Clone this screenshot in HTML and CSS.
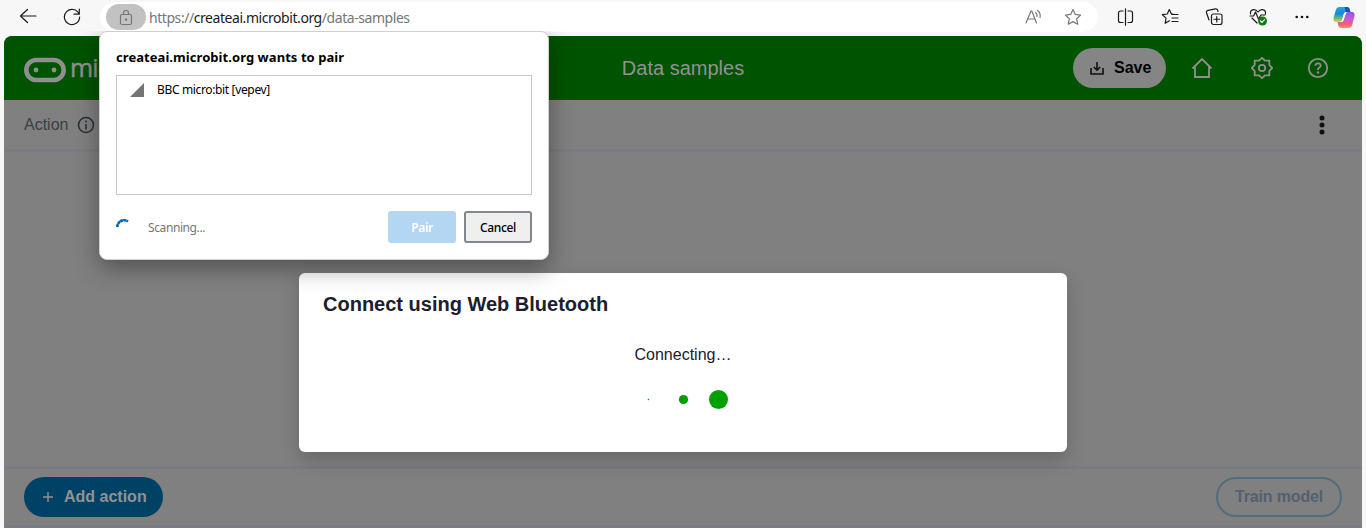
FILE: index.html
```html
<!DOCTYPE html>
<html lang="en">
<head>
<meta charset="utf-8">
<title>Data samples</title>
<link rel="stylesheet" href="styles.css">
</head>
<body>
<div class="browser">
  <div class="toolbar">
    <svg class="back" width="18" height="18" viewBox="0 0 18 18"><path d="M17 9H1.500M8.500 2.500L1.500 9l7 6.500"/></svg>
    <svg class="reload" width="18" height="18" viewBox="0 0 18 18"><path d="M16 6A7.600 7.600 0 1 0 16.600 9M16.300 1v5.200H11"/></svg>
    <div class="address">
      <span class="lock"><svg width="14" height="17" viewBox="0 0 14 17"><rect x="1.500" y="5.500" width="11" height="10" rx="1.500"/><path d="M4.500 5.500V4a2.500 2.500 0 0 1 5 0v1.500"/><circle class="dot" cx="7" cy="10.500" r="1.200"/></svg></span>
      <span class="url">https://<b>createai.microbit.org</b>/data-samples</span>
      <svg class="read" width="18" height="16" viewBox="0 0 18 16"><path d="M1 14L6 2h.8L11.500 14M2.800 10h7M10.500 3.500q2 1.500 1.500 4M12.500 1.500q3.500 2.500 2.500 7"/></svg>
      <svg class="star" width="18" height="18" viewBox="0 0 18 18"><path d="M9 1.500l2.300 4.900 5.300.7-3.900 3.700 1 5.400L9 13.600l-4.700 2.600 1-5.400L1.400 7.100l5.300-.7z"/></svg>
    </div>
    <div class="tools">
      <svg width="18" height="18" viewBox="0 0 18 18"><path d="M6 3H3.500a2 2 0 0 0-2 2v7.500a2 2 0 0 0 2 2H6M11 3h2.500a2 2 0 0 1 2 2v7.500a2 2 0 0 1-2 2H11M8.500 .8v16.400"/></svg>
      <svg width="18" height="18" viewBox="0 0 18 18"><path d="M12 6L10.300 5.800 8.300 1.500 6.300 6l-4.900.7 3.600 3.400-.8 5.200 4.200-2.500M11 6.500h6M11 10h6M11 13.500h6"/></svg>
      <svg width="18" height="18" viewBox="0 0 18 18"><rect x="6.500" y="6" width="10.500" height="10.500" rx="2"/><path d="M11.750 8.500v5.500M9 11.250h5.500M4 12L1.600 5Q1 2.900 3 2.300L10.500.9q1.700-.2 2.200 1.200l.3 1.400"/></svg>
      <svg width="18" height="18" viewBox="0 0 18 18"><path d="M1 8h3.500l2-4 3 7 2.500-4h4M1.500 6Q1 2.200 4.500 1.700 7.200 1.500 9 4q1.800-2.500 4.500-2.300Q17 2.200 16.500 6M3 10l5 5"/><circle cx="13.500" cy="13" r="4.500" fill="#107c10" stroke="none"/><path class="tick" d="M11.500 13l1.400 1.400 2.600-2.800"/></svg>
      <svg width="18" height="18" viewBox="0 0 18 18"><g fill="#111" stroke="none"><circle cx="3.700" cy="9" r="1.300"/><circle cx="9" cy="9" r="1.300"/><circle cx="14.300" cy="9" r="1.300"/></g></svg>
    </div>
    <svg class="copilot" width="22" height="21" viewBox="0 0 22 21">
      <defs>
        <linearGradient id="cool" x1="0" y1="0" x2="0" y2="1"><stop offset="0" stop-color="#1ba8e8"/><stop offset=".45" stop-color="#1588dc"/><stop offset=".75" stop-color="#65bd72"/><stop offset="1" stop-color="#f4d025"/></linearGradient>
        <linearGradient id="warm" x1="0" y1="0" x2="0" y2="1"><stop offset="0" stop-color="#8c55e8"/><stop offset=".45" stop-color="#c85bd6"/><stop offset=".75" stop-color="#f45b7d"/><stop offset="1" stop-color="#ff9450"/></linearGradient>
      </defs>
      <path fill="url(#cool)" d="M6 0h8q2 0 2.600 2l.8 3H14q-2 0-2.600 2l-2 6q-.7 2-2.700 2H3Q0 15 .5 11L3 2.500Q3.700 0 6 0z"/>
      <path fill="#1851bd" d="M11.500 0H14q2 0 2.600 2l.8 3H14q-1.500 0-1.500-1.500z"/>
      <path fill="url(#warm)" d="M16 21H8q-2 0-2.600-2l-.8-4H8q2 0 2.600-2l2-6q.7-2 2.700-2H19q3 0 2.500 4L19 18.500Q18.300 21 16 21z"/>
      <path fill="#fff" d="M11.500 5.500H14q-1.300.5-1.700 2l-1.700 5.500q-.6 2-2.100 2H7.300q1.300-.5 1.700-2l1.500-5.500q.4-1.500 1-2z"/>
    </svg>
  </div>

  <div class="page">
    <header class="app-header">
      <div class="logo">
        <svg width="42" height="26" viewBox="0 0 42 26"><rect x="2.300" y="3" width="37.400" height="20" rx="10"/><circle class="dot" cx="12" cy="13" r="2.400"/><circle class="dot" cx="30" cy="13" r="2.400"/></svg>
        <span>mic</span>
      </div>
      <h1>Data samples</h1>
      <div class="actions">
        <div class="save"><svg width="14" height="13" viewBox="0 0 14 13"><path d="M1 6v6h12V6M7 0v8M3.800 5L7 8.200 10.200 5"/></svg>Save</div>
        <svg width="22" height="22" viewBox="0 0 22 22"><path d="M1.500 11.500L11 2l9.500 9.500M4 9.500V20h14V9.500"/></svg>
        <svg width="22" height="22" viewBox="0 0 22 22"><path d="M11 .9L14 3.700h4.300V8L21.200 11 18.300 14v4.300H14L11 21.100 8 18.300H3.700V14L.8 11 3.700 8V3.700H8z"/><circle cx="11" cy="11" r="3.200"/></svg>
        <svg width="22" height="22" viewBox="0 0 22 22"><circle cx="11" cy="11" r="9.200"/><path d="M8.200 8.700Q8.500 6.300 11 6.300T13.700 8.500Q13.700 9.700 12.300 10.500T11 13"/><circle class="dot" cx="11" cy="15.500" r="1.200"/></svg>
      </div>
    </header>
    <div class="columns">
      <span>Action</span>
      <svg class="info" width="18" height="18" viewBox="0 0 18 18"><circle cx="9" cy="9" r="7.500"/><path d="M9 8v5.500M9 4.500v2"/></svg>
      <svg class="more" width="6" height="20" viewBox="0 0 6 20"><circle cx="3" cy="3" r="2.500"/><circle cx="3" cy="10" r="2.500"/><circle cx="3" cy="17" r="2.500"/></svg>
    </div>
    <main class="samples"></main>
    <footer class="bottom">
      <div class="add"><svg width="10" height="10" viewBox="0 0 10 10"><path d="M5 0v10M0 5h10"/></svg>Add action</div>
      <div class="train">Train model</div>
    </footer>
  </div>
</div>

<section class="modal">
  <h2>Connect using Web Bluetooth</h2>
  <p>Connecting…</p>
  <svg class="loader" width="90" height="20" viewBox="0 0 90 20"><circle cx="10.500" cy="10.500" r=".8"/><circle cx="45.500" cy="10.500" r="4.600"/><circle cx="80.500" cy="10.500" r="9.500"/></svg>
</section>

<section class="pair-dialog">
  <h3>createai.microbit.org wants to pair</h3>
  <div class="devices">
    <svg width="14" height="14" viewBox="0 0 14 14"><path d="M14 0v14H0z"/></svg>
    <span>BBC micro:bit [vepev]</span>
  </div>
  <div class="dialog-foot">
    <svg class="spinner" width="16" height="16" viewBox="0 0 16 16"><path d="M1.300 8A6.800 6.800 0 0 1 12 2.500"/></svg>
    <span class="scan">Scanning...</span>
    <div class="btn pair">Pair</div>
    <div class="btn cancel">Cancel</div>
  </div>
</section>
</body>
</html>
```
FILE: styles.css
```css
* { box-sizing: border-box; }
body { margin: 0; width: 1366px; height: 528px; overflow: hidden; position: relative; background: #f7f7f7; font-family: "Liberation Sans", Arial, sans-serif; font-size: 16px; }
h1, h2, h3, p { margin: 0; }
svg { display: block; flex: none; fill: none; }
.browser { display: flex; flex-direction: column; height: 528px; }
.toolbar { height: 36px; flex: none; display: flex; align-items: flex-start; padding: 0 10px 0 19px; font-family: "Noto Sans", sans-serif; }
.toolbar svg { stroke: #1b1b1b; stroke-width: 1.2; stroke-linecap: round; stroke-linejoin: round; }
.toolbar .back { margin-top: 7px; }
.toolbar .reload { margin: 8px 0 0 26px; }
.address { width: 998px; height: 30px; margin: 2px 0 0 19px; background: #fff; border-radius: 15px; display: flex; align-items: center; padding-left: 6px; }
.lock { width: 40px; height: 26px; border-radius: 13px; background: #c2c2c2; display: flex; align-items: center; justify-content: center; }
.toolbar .lock svg { stroke: #777; }
.toolbar .lock .dot { fill: #777; stroke: none; }
.url { margin-left: 3px; width: 262px; white-space: nowrap; font-size: 14px; letter-spacing: -.44px; color: #767676; }
.url b { font-weight: 400; color: #1a1a1a; }
.toolbar .read { margin-left: 614px; stroke: #777; }
.toolbar .star { margin-left: 21px; stroke: #777; }
.tools { display: flex; gap: 26px; margin: 8px 0 0 19px; }
.toolbar .tick { stroke: #fff; }
.toolbar .copilot { margin: 7px 0 0 22px; stroke: none; }
.page { width: 1358px; margin-left: 4px; flex: 1; display: flex; flex-direction: column; background: #808080; border-radius: 8px 8px 0 0; overflow: hidden; }
.app-header { height: 64px; flex: none; display: grid; grid-template-columns: 1fr auto 1fr; align-items: center; padding: 0 33px 0 20px; background: #005300; color: #8f8f8f; }
.logo { display: flex; align-items: center; gap: 4px; width: 75px; overflow: hidden; font-family: "Open Sans", sans-serif; font-size: 25px; letter-spacing: -.8px; height: 40px; }
.logo span { line-height: 30px; margin-top: -2px; width: 29px; overflow: hidden; -webkit-text-stroke: .5px #8f8f8f; }
.logo svg { stroke: #8f8f8f; stroke-width: 4.600; margin-top: 3px; }
.logo .dot { fill: #8f8f8f; stroke: none; }
h1 { font-size: 20px; font-weight: 400; padding-left: 13px; color: #929292; }
.actions { display: flex; align-items: center; justify-content: flex-end; }
.actions > svg { stroke: #8f8f8f; stroke-width: 1.8; }
.actions .dot { fill: #8f8f8f; stroke: none; }
.save { width: 93px; height: 40px; border-radius: 20px; background: #858585; color: #000; font-weight: 700; display: flex; align-items: center; gap: 10px; padding-left: 17px; margin-right: 25px; }
.save svg { stroke: #111; stroke-width: 1.6; }
.save + svg { margin-right: 38px; }
.save + svg + svg { margin-right: 34px; }
.columns { height: 52px; flex: none; border-bottom: 3px solid #777d82; display: flex; align-items: center; padding: 0 37px 0 20px; color: #3b3e42; }
.info { margin-left: 9px; stroke: #2c3036; stroke-width: 1.6; margin-top: 1px; }
.more { margin-left: auto; fill: #0d1117; margin-top: 1px; }
.samples { flex: 1; }
.bottom { height: 62px; flex: none; border-top: 3px solid #777d82; border-bottom: 3px solid #777d82; display: flex; align-items: center; justify-content: space-between; padding: 0 20px; font-weight: 700; }
.add { width: 139px; height: 40px; border-radius: 20px; background: #004265; color: #929292; display: flex; align-items: center; padding-left: 19px; gap: 11px; }
.add svg { stroke: #929292; stroke-width: 1.4; }
.train { width: 126px; height: 40px; border: 2px solid #4f6d7e; border-radius: 20px; color: #53616e; letter-spacing: -.15px; display: flex; align-items: center; justify-content: center; }
.modal { position: absolute; left: 299px; top: 273px; width: 768px; height: 179px; padding: 18px 24px; border-radius: 6px; background: #fff; box-shadow: 0 8px 20px rgba(0,0,0,.2); display: flex; flex-direction: column; align-items: center; color: #1a202c; }
h2 { align-self: flex-start; font-size: 20px; line-height: 26px; }
.modal p { margin-top: 28px; line-height: 20px; }
.loader { margin-top: 24px; fill: #00a000; }
.pair-dialog { position: absolute; left: 99px; top: 31px; width: 450px; height: 229px; border: 1px solid #cfcfcf; border-radius: 8px; background: #fff; box-shadow: 0 8px 24px rgba(0,0,0,.38); clip-path: inset(0 -40px -50px -40px); padding: 16px 16px; font-family: "Noto Sans", sans-serif; font-size: 12px; color: #000; }
h3 { font-size: 13px; line-height: 19px; white-space: nowrap; letter-spacing: .06px; }
.devices { height: 120px; margin-top: 8px; border: 1px solid #c8c8c8; display: flex; align-items: flex-start; padding: 7px 13px; gap: 13px; line-height: 14px; letter-spacing: -.35px; }
.devices svg { fill: #757575; }
.dialog-foot { display: flex; align-items: center; margin-top: 16px; height: 32px; }
.spinner { stroke: #0063b1; stroke-width: 2.6; stroke-dasharray: 2.900 .3; }
.scan { margin: 0 auto 0 16px; color: #767676; letter-spacing: -.4px; }
.btn { width: 68px; height: 32px; border-radius: 3px; display: flex; align-items: center; justify-content: center; font-weight: 600; letter-spacing: -.35px; }
.pair { background: #b3d6f2; color: #fff; margin-right: 8px; }
.cancel { background: #efefef; border: 2px solid #83868c; font-weight: 500; }
```
